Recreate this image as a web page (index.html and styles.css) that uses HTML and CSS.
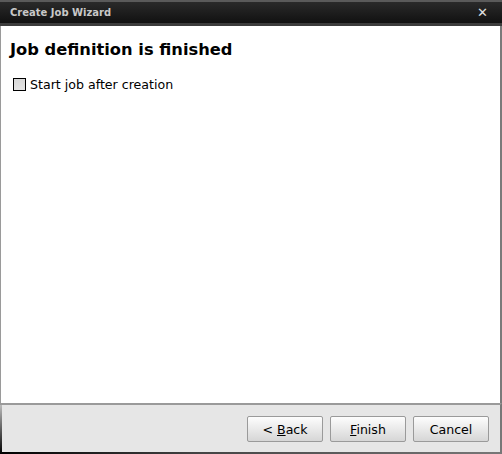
FILE: index.html
```html
<!DOCTYPE html>
<html>
<head>
<meta charset="utf-8">
<link rel="stylesheet" href="styles.css">
</head>
<body>
<div class="window">
  <div class="titlebar">
    <span class="title">Create Job Wizard</span>
    <span class="close">✕</span>
  </div>
  <div class="content">
    <h1 class="heading">Job definition is finished</h1>
    <label class="check"><span class="box"></span><span>Start job after creation</span></label>
  </div>
  <div class="footer">
    <button class="btn">&lt; <u>B</u>ack</button>
    <button class="btn"><u>F</u>inish</button>
    <button class="btn">Cancel</button>
  </div>
</div>
</body>
</html>
```
FILE: styles.css
```css
html, body {
  margin: 0;
  padding: 0;
  background: #ffffff;
}
.window {
  width: 502px;
  height: 454px;
  display: flex;
  flex-direction: column;
  box-sizing: border-box;
  font-family: "DejaVu Sans", sans-serif;
}
.titlebar {
  height: 26px;
  box-sizing: border-box;
  background: linear-gradient(#2a2a2a, #111111);
  border-top: 2px solid #5a5a5a;
  border-bottom: 3px solid #3c3c3c;
  display: flex;
  align-items: center;
  justify-content: space-between;
  padding: 0 14px 0 10px;
}
.title {
  color: #c8c8c8;
  font-weight: bold;
  font-size: 10px;
}
.close {
  color: #e0e0e0;
  font-size: 13px;
  font-weight: bold;
}
.content {
  flex: 1;
  background: #ffffff;
  border-left: 1px solid #9a9a9a;
  border-right: 2px solid #7a7a7a;
  padding: 14px 10px 0 9px;
}
.heading {
  margin: 0;
  font-size: 16.3px;
  font-weight: bold;
  color: #000;
  line-height: 20px;
}
.check {
  display: flex;
  align-items: center;
  gap: 4px;
  margin-top: 17px;
  margin-left: 3px;
  font-size: 12.6px;
  color: #000;
}
.box {
  width: 11px;
  height: 11px;
  border: 1px solid #000;
  background: linear-gradient(#d8d8d8, #e4e4e4);
}
.footer {
  height: 51px;
  box-sizing: border-box;
  background:
    linear-gradient(#bbbbbb, #000000) left top / 2px 100% no-repeat,
    linear-gradient(to right, #000000, #444444 40%, #777777) left bottom / 100% 2px no-repeat,
    #e6e6e6;
  border-top: 2px solid #9a9a9a;
  border-right: 2px solid #777;
  display: flex;
  justify-content: flex-end;
  align-items: flex-start;
  gap: 7px;
  padding: 11px 11px 0 0;
}
.btn {
  width: 76px;
  height: 26px;
  font-family: "DejaVu Sans", sans-serif;
  font-size: 12.6px;
  color: #000;
  border: 1px solid #9a9a9a;
  border-radius: 2px;
  background: linear-gradient(#fdfdfd, #d6d6d6);
  padding: 0;
}
```
